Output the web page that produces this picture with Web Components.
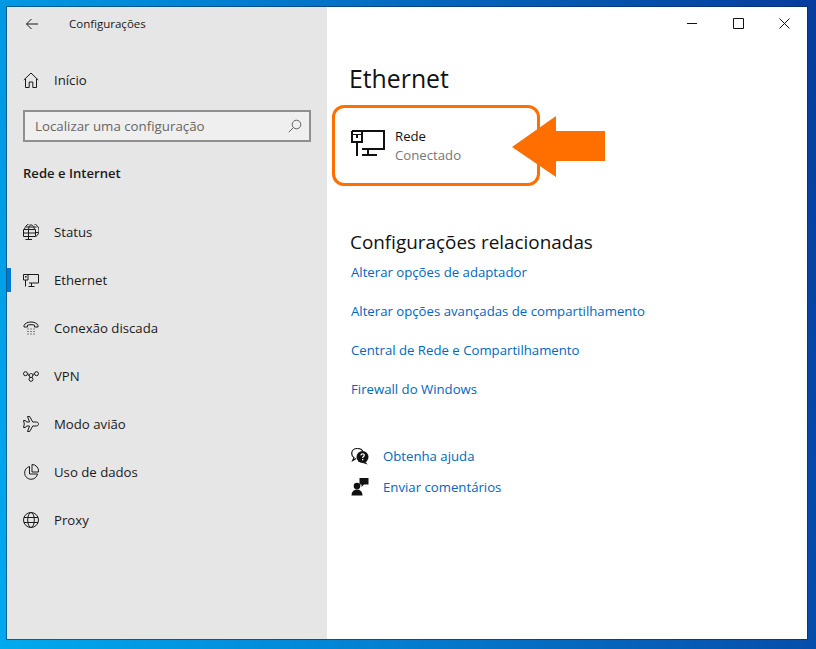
<!DOCTYPE html>
<html lang="pt-BR">
<head>
<meta charset="utf-8">
<title>Configurações</title>
<style>
  html, body { margin: 0; height: 100%; }
  body { font-family: "Open Sans", "Liberation Sans", sans-serif; color: #1a1a1a; }
</style>
</head>
<body>
<desk-top>
  <settings-window>
    <settings-sidebar slot="side">
      <nav-item icon="status">Status</nav-item>
      <nav-item icon="ethernet" active>Ethernet</nav-item>
      <nav-item icon="dial">Conexão discada</nav-item>
      <nav-item icon="vpn">VPN</nav-item>
      <nav-item icon="plane">Modo avião</nav-item>
      <nav-item icon="data">Uso de dados</nav-item>
      <nav-item icon="proxy">Proxy</nav-item>
    </settings-sidebar>
    <settings-main slot="main">
      <rel-link>Alterar opções de adaptador</rel-link>
      <rel-link>Alterar opções avançadas de compartilhamento</rel-link>
      <rel-link>Central de Rede e Compartilhamento</rel-link>
      <rel-link>Firewall do Windows</rel-link>
      <help-row slot="help" icon="help">Obtenha ajuda</help-row>
      <help-row slot="help" icon="feedback">Enviar comentários</help-row>
    </settings-main>
  </settings-window>
</desk-top>

<script>
const ICONS = {
  back: `<svg width="14" height="12" viewBox="0 0 14 12" fill="none" stroke="#1a1a1a"><path d="M13 6H1.500M6.500 1l-5 5 5 5"/></svg>`,
  home: `<svg width="16" height="16" viewBox="0 0 16 16" fill="none" stroke="#1a1a1a"><path d="M.8 8 8 1l7.200 7M2.500 6.800v8.700h3.700v-5.500h3.600v5.500h3.700v-8.700"/></svg>`,
  search: `<svg width="14" height="14" viewBox="0 0 14 14" fill="none" stroke="#5f5f5f"><circle cx="8.500" cy="5.500" r="4.300"/><path d="M5.400 8.600.8 13.200"/></svg>`,
  status: `<svg width="16" height="16" viewBox="0 0 16 16" fill="none" stroke="#1a1a1a"><path d="M1.500 5.500A7.300 7.300 0 1 1 13 12.500M5.500 5.500C5.700 3 6.700.8 8 .8c2 0 3.400 2.800 3.400 4.700M3 3h10.500M12.500 8.500h3"/><path d="M.5 5.500h12v7H.5zM5.500 5.500v7M.5 9h12M5.500 12.500v3M2.500 15.500h6.500"/></svg>`,
  ethernet: `<svg width="16" height="13" viewBox="0 0 16 13" fill="none" stroke="#1a1a1a"><path d="M.5.500h15v8.500H6M.5.500v5.500h4.500V.500M2.500 6v6.500M8.500 9v3.500M5.500 12.500h6"/><path d="M2 2h1.500v1.500H2z" fill="#1a1a1a" stroke="none"/></svg>`,
  dial: `<svg width="16" height="14" viewBox="0 0 16 14" fill="none" stroke="#1a1a1a"><path d="M1 6V4.500C2 2 5 1 8 1s6 1 7 3.500V6h-3.500V4.200C10 3.500 6 3.500 4.500 4.200V6z"/><path stroke-dasharray="1 2" d="M4.500 8h7.500M4.500 10.500h7.500M4.500 13h7.500"/></svg>`,
  vpn: `<svg width="16" height="11" viewBox="0 0 16 11" fill="none" stroke="#1a1a1a"><circle cx="2.500" cy="2.700" r="2"/><circle cx="13.500" cy="2.700" r="2"/><circle cx="8" cy="8.300" r="2"/><path d="M4.500 2.700c1.500 0 2 1.200 2.300 3.800M11.500 2.700c-1.500 0-2 1.200-2.300 3.800M5.200 4.800C6.200 4 7 2.500 8 2.500s1.600.9 2.800 1.700"/></svg>`,
  plane: `<svg width="16" height="16" viewBox="0 0 16 16" fill="none" stroke="#1a1a1a"><path d="M4.500.5h2.200l3 5.500h3.800c1 0 2 .9 2 2s-1 2-2 2H9.700l-3 5.500H4.500L6.500 10H3.500l-1 1.500H.5L1.300 8 .5 4.500h2l1 1.500h3z"/></svg>`,
  data: `<svg width="16" height="16" viewBox="0 0 16 16" fill="none" stroke="#1a1a1a"><path d="M6.500 2.500A6.500 6.500 0 1 0 14.500 10H6.500z"/><path d="M9 .5a6.500 6.500 0 0 1 6.500 7.500H9z"/></svg>`,
  proxy: `<svg width="16" height="16" viewBox="0 0 16 16" fill="none" stroke="#1a1a1a"><circle cx="8" cy="8" r="7.500"/><ellipse cx="8" cy="8" rx="3.300" ry="7.500"/><path d="M1 5.500h14M1 10.500h14"/></svg>`,
  net: `<svg width="34" height="26" viewBox="0 0 34 26" fill="none" stroke="#111" stroke-width="2"><path d="M1 1h32v18H11M1 1v11h10V1M6 12v14M17 19v6M11 25h15"/><path d="M2 4.500h8" stroke-width="1"/><path d="M5 5h2v3H5z" fill="#111" stroke="none"/></svg>`,
  help: `<svg width="18" height="17" viewBox="0 0 18 17"><path d="M6.500.5C3 .5.700 2.700.700 5.500c0 1.700.9 3.200 2.300 4.100L1.700 12.500l3.500-2" fill="none" stroke="#111" stroke-width="1.200"/><path d="M6.500.5c2.500 0 4.600 1.100 5.500 3" fill="none" stroke="#111" stroke-width="1.200"/><circle cx="11.500" cy="9" r="6" fill="#111"/><path d="M14 13.500l2.700 3-5-1.500z" fill="#111"/><path d="M9.800 7.300c.2-1 .9-1.400 1.800-1.400 1 0 1.700.6 1.700 1.400 0 1.300-1.700 1.200-1.700 2.700" fill="none" stroke="#fff" stroke-width="1.200"/><rect x="11" y="11" width="1.300" height="1.300" fill="#fff"/></svg>`,
  feedback: `<svg width="18" height="18" viewBox="0 0 18 18" fill="#111"><path d="M8.500 0H17.500V6.500H13L10.500 9V6.500H8.500z"/><circle cx="6" cy="8" r="3.300"/><path d="M.5 17.500c0-3.500 2.200-6 5.500-6s5.500 2.500 5.500 6z"/></svg>`
};

class DeskTop extends HTMLElement {
  constructor() {
    super();
    this.attachShadow({ mode: "open" }).innerHTML = `
    <style>
      :host {
        display: block; box-sizing: border-box; width: 816px; height: 649px;
        padding: 7px 9px 10px 7px; overflow: hidden;
        background: linear-gradient(76deg, #00aaee 0%, #0288d8 32%, #0664bc 62%, #063c9e 100%);
      }
    </style>
    <slot></slot>`;
  }
}

class SettingsWindow extends HTMLElement {
  constructor() {
    super();
    this.attachShadow({ mode: "open" }).innerHTML = `
    <style>
      :host {
        display: flex; height: 632px; background: #fff;
        box-shadow: 0 0 0 1px rgba(10, 40, 80, .55);
      }
      .side { flex: 0 0 320px; display: flex; }
      .main { flex: 1; display: flex; }
      ::slotted(*) { flex: 1; }
    </style>
    <div class="side"><slot name="side"></slot></div>
    <div class="main"><slot name="main"></slot></div>`;
  }
}

class SettingsSidebar extends HTMLElement {
  constructor() {
    super();
    this.attachShadow({ mode: "open" }).innerHTML = `
    <style>
      :host { display: block; background: #e6e6e6; font-size: 13.200px; color: #1a1a1a; }
      .top { display: flex; align-items: center; height: 33px; padding-left: 18px; }
      .top .title { margin-left: 30px; font-size: 11.500px; }
      .back { display: flex; }
      .home { display: flex; align-items: center; height: 48px; margin-top: 16px; padding-left: 16px; }
      .home span { margin-left: 15px; }
      .home svg { display: block; }
      .search {
        box-sizing: border-box; display: flex; align-items: center; justify-content: space-between;
        height: 32px; margin: 6px 16px 0; padding: 0 7px 0 10px;
        border: 2px solid #8f8f8f; background: #efefef; color: #666; font-size: 13.300px;
      }
      h2 { margin: 21px 16px 0; height: 20px; font-size: 13.100px; line-height: 20px; font-weight: 600; }
      nav { margin-top: 25px; }
    </style>
    <div class="top"><span class="back">${ICONS.back}</span><span class="title">Configurações</span></div>
    <div class="home">${ICONS.home}<span>Início</span></div>
    <div class="search"><span>Localizar uma configuração</span>${ICONS.search}</div>
    <h2>Rede e Internet</h2>
    <nav><slot></slot></nav>`;
  }
}

class NavItem extends HTMLElement {
  constructor() {
    super();
    this.attachShadow({ mode: "open" }).innerHTML = `
    <style>
      :host { display: flex; align-items: center; height: 48px; position: relative; }
      .ico { display: flex; justify-content: center; width: 16px; margin: 0 15px 0 16px; }
      .ico svg { display: block; }
      .bar { display: none; position: absolute; left: 0; top: 12px; width: 4px; height: 24px; background: #0078d7; }
      :host([active]) .bar { display: block; }
    </style>
    <i class="bar"></i>
    <span class="ico">${ICONS[this.getAttribute("icon")]}</span>
    <slot></slot>`;
  }
}

class SettingsMain extends HTMLElement {
  constructor() {
    super();
    this.attachShadow({ mode: "open" }).innerHTML = `
    <style>
      :host { display: block; position: relative; background: #fff; font-size: 13.200px; color: #111; }
      .caption { display: flex; justify-content: flex-end; height: 32px; padding-top: 1px; }
      .caption span { display: flex; align-items: center; justify-content: center; width: 46px; height: 30px; }
      .caption svg { display: block; }
      h1 { margin: 20px 0 0 22px; height: 36px; font-size: 24.800px; line-height: 36px; font-weight: 400; }
      net-card { margin: 9px 0 0 5px; }
      h3 { margin: 43px 0 0 23px; height: 26px; font-size: 18.900px; line-height: 26px; font-weight: 400; }
      .links { margin: 7px 0 0 24px; display: flex; flex-direction: column; gap: 19px; }
      .help { margin: 47px 0 0 24px; display: flex; flex-direction: column; gap: 11px; }
      .arrow { position: absolute; left: 185px; top: 109px; }
    </style>
    <div class="caption">
      <span><svg width="10" height="10" fill="none" stroke="#111"><path d="M0 5.500h10"/></svg></span>
      <span><svg width="11" height="11" fill="none" stroke="#111"><path d="M.5.500h10v10H.5z"/></svg></span>
      <span><svg width="11" height="11" fill="none" stroke="#111"><path d="M.5.500l10 10M10.500.500l-10 10"/></svg></span>
    </div>
    <h1>Ethernet</h1>
    <net-card name="Rede" state="Conectado"></net-card>
    <h3>Configurações relacionadas</h3>
    <div class="links"><slot></slot></div>
    <div class="help"><slot name="help"></slot></div>
    <svg class="arrow" width="94" height="62" viewBox="0 0 94 62"><path d="M0 31 44 0v15h49v30H44v16z" fill="#ff6f00"/></svg>`;
  }
}

class NetCard extends HTMLElement {
  constructor() {
    super();
    this.attachShadow({ mode: "open" }).innerHTML = `
    <style>
      :host {
        display: flex; box-sizing: border-box; width: 208px; height: 81px;
        padding: 22px 0 0 16px; gap: 10px;
        border: 3px solid #ff6f00; border-radius: 12px; background: #fff;
      }
      svg { display: block; }
      .txt { margin-top: -3px; line-height: 19px; }
      .state { color: #767676; }
    </style>
    ${ICONS.net}
    <div class="txt"><div>${this.getAttribute("name")}</div><div class="state">${this.getAttribute("state")}</div></div>`;
  }
}

class RelLink extends HTMLElement {
  constructor() {
    super();
    this.attachShadow({ mode: "open" }).innerHTML = `
    <style>
      :host { display: block; height: 20px; line-height: 20px; color: #0067c0; }
    </style>
    <slot></slot>`;
  }
}

class HelpRow extends HTMLElement {
  constructor() {
    super();
    this.attachShadow({ mode: "open" }).innerHTML = `
    <style>
      :host { display: flex; align-items: center; gap: 14px; height: 20px; line-height: 20px; color: #0067c0; }
      .ico { display: flex; width: 18px; }
      svg { display: block; }
    </style>
    <span class="ico">${ICONS[this.getAttribute("icon")]}</span>
    <slot></slot>`;
  }
}

customElements.define("desk-top", DeskTop);
customElements.define("settings-window", SettingsWindow);
customElements.define("settings-sidebar", SettingsSidebar);
customElements.define("nav-item", NavItem);
customElements.define("settings-main", SettingsMain);
customElements.define("net-card", NetCard);
customElements.define("rel-link", RelLink);
customElements.define("help-row", HelpRow);
</script>
</body>
</html>
